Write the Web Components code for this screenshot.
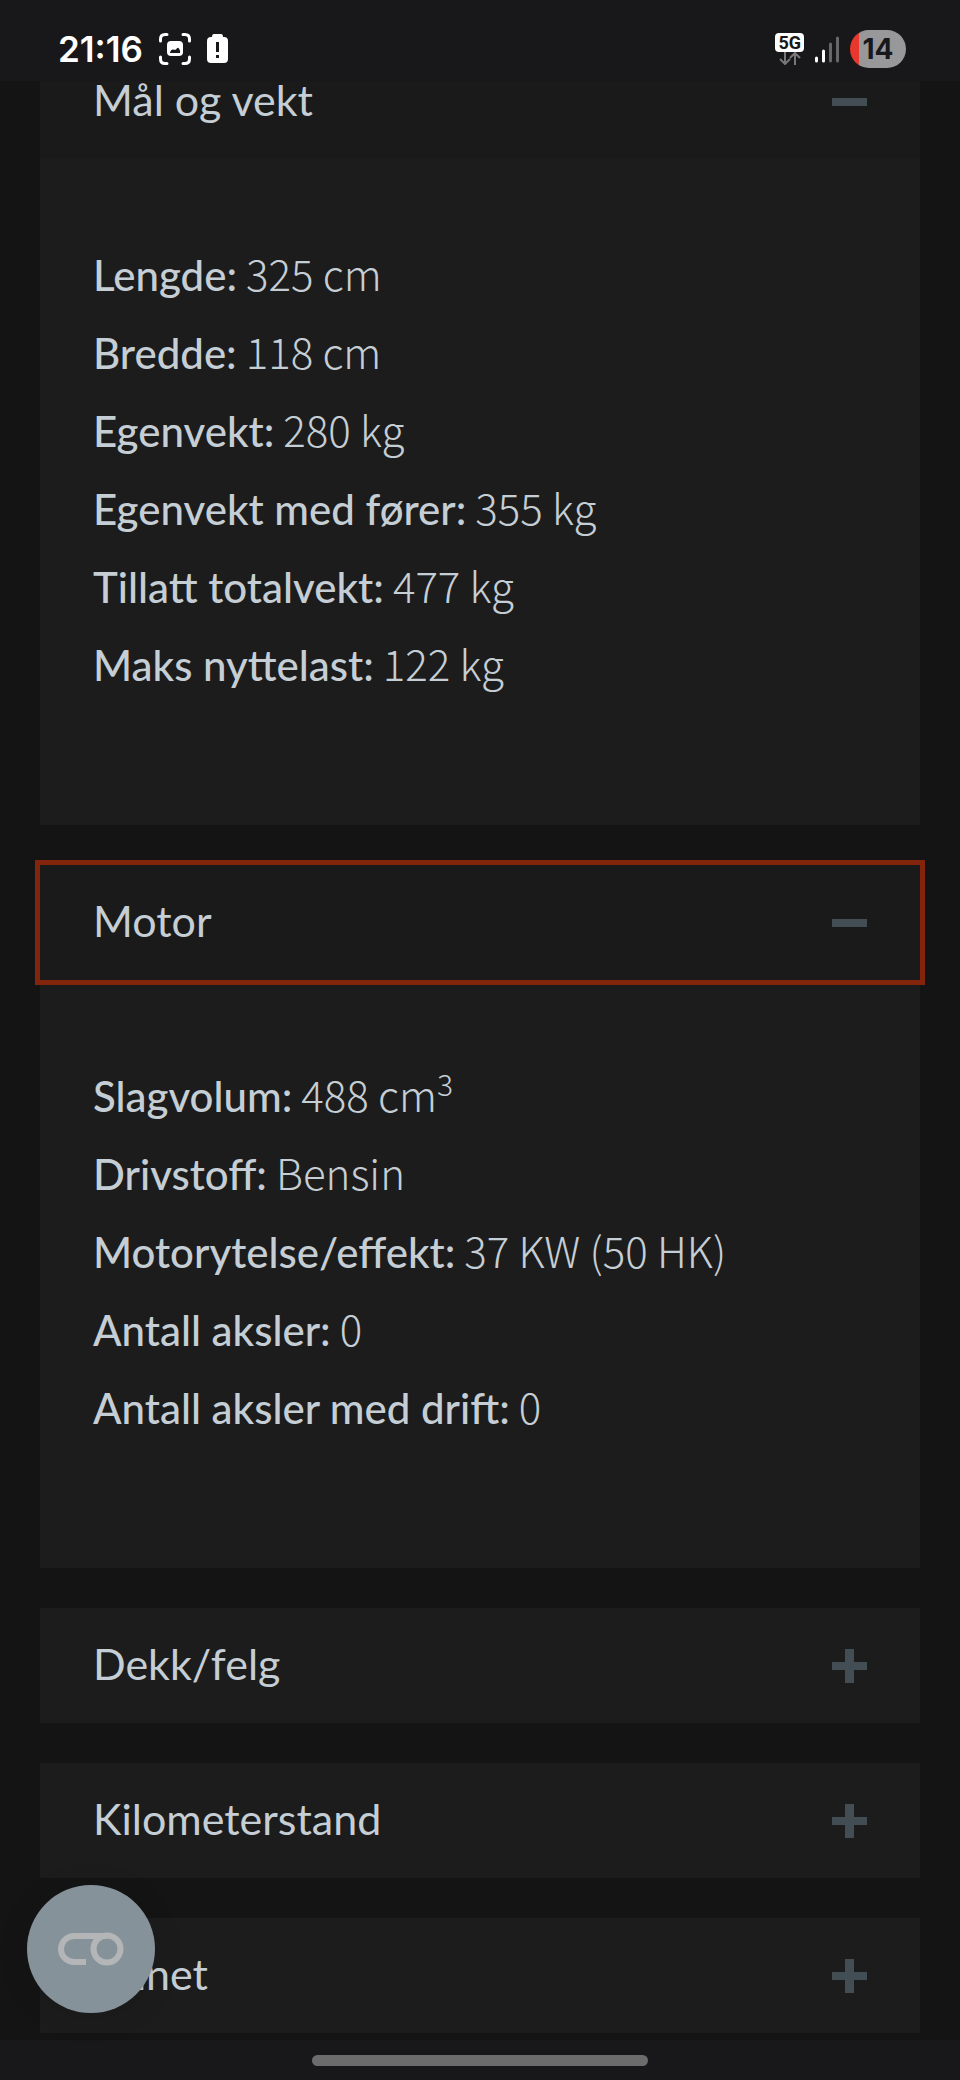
<!DOCTYPE html>
<html lang="no">
<head>
<meta charset="utf-8">
<meta name="viewport" content="width=device-width, initial-scale=1">
<title>Kjøretøydetaljer</title>
<style>
  html { background: #141414; }
  body {
    margin: 0;
    background: #141414;
    color: #c5ced4;
    font-family: Lato, "Noto Sans", sans-serif;
    font-size: 42px;
  }
</style>
</head>
<body>
<vehicle-page>
  <status-bar slot="status" time="21:16" battery="14"></status-bar>
  <accordion-item heading="Mål og vekt" open>
    <spec-row label="Lengde:">325 cm</spec-row>
    <spec-row label="Bredde:">118 cm</spec-row>
    <spec-row label="Egenvekt:">280 kg</spec-row>
    <spec-row label="Egenvekt med fører:">355 kg</spec-row>
    <spec-row label="Tillatt totalvekt:">477 kg</spec-row>
    <spec-row label="Maks nyttelast:">122 kg</spec-row>
  </accordion-item>
  <accordion-item heading="Motor" open current>
    <spec-row label="Slagvolum:">488 cm<sup>3</sup></spec-row>
    <spec-row label="Drivstoff:">Bensin</spec-row>
    <spec-row label="Motorytelse/effekt:">37 KW (50 HK)</spec-row>
    <spec-row label="Antall aksler:">0</spec-row>
    <spec-row label="Antall aksler med drift:">0</spec-row>
  </accordion-item>
  <accordion-item heading="Dekk/felg"></accordion-item>
  <accordion-item heading="Kilometerstand"></accordion-item>
  <accordion-item heading="Annet"></accordion-item>
  <chat-button slot="overlay"></chat-button>
  <gesture-bar slot="navigation"></gesture-bar>
</vehicle-page>

<script>
  class BaseElement extends HTMLElement {
    connectedCallback() {
      if (this.shadowRoot) return;
      this.attachShadow({ mode: 'open' }).innerHTML = this.render();
      this.ready();
    }
    ready() {}
  }

  customElements.define('vehicle-page', class extends BaseElement {
    render() {
      return `
        <style>
          :host { display: flex; flex-direction: column; min-height: 100vh; }
          main {
            display: flex; flex-direction: column; gap: 40px; flex: 1;
            margin-top: -37px; padding: 0 40px 7px;
          }
        </style>
        <slot name="status"></slot>
        <main><slot></slot></main>
        <slot name="overlay"></slot>
        <slot name="navigation"></slot>`;
    }
  });

  customElements.define('status-bar', class extends BaseElement {
    render() {
      return `
        <style>
          :host {
            display: flex; align-items: center; justify-content: space-between;
            position: sticky; top: 0; z-index: 2; box-sizing: border-box;
            height: 81px; padding: 17px 54px 0 58px;
            background: #18181a; color: #fff;
            font-family: Inter, sans-serif; font-weight: 600;
          }
          .side { display: flex; align-items: center; }
          .left { gap: 16px; }
          .right { gap: 11px; }
          time { font-size: 35px; line-height: 40px; }
          svg { display: block; }
          .network { display: flex; flex-direction: column; align-items: center; }
          .network b {
            padding: 0 3px; border-radius: 4px; background: #fff; color: #18181a;
            font: 700 18px/19px Roboto, sans-serif;
          }
          .battery {
            width: 56px; border-radius: 19px; text-align: center;
            background: linear-gradient(90deg, #e8382d 9px, #98989a 9px);
            color: #18181a; font-size: 28px; font-weight: 700; line-height: 38px;
          }
        </style>
        <div class="side left">
          <time>${this.getAttribute('time')}</time>
          <svg width="32" height="32" viewBox="0 0 32 32" fill="none" stroke="#fff" stroke-width="3" stroke-linecap="round" aria-hidden="true">
            <path d="M1.5 8V6Q1.5 1.5 6 1.5H8M24 1.5h2Q30.500 1.500 30.500 6V8M30.500 24v2Q30.500 30.500 26 30.500H24M8 30.500H6Q1.500 30.500 1.500 26V24"/>
            <rect x="8" y="8" width="16" height="15" rx="4" fill="#fff" stroke="none"/>
            <path d="M11 19.500Q12 16 14 16.500T17 16.500Q19 13 20.500 16.500Q21.500 18 21 20H12Q11 20 11 19.500Z" fill="#18181a" stroke="none"/>
          </svg>
          <svg width="21" height="30" viewBox="0 0 21 30" aria-hidden="true">
            <path fill="#fff" d="M7 0h7q2 0 2 3h1q4 0 4 4v18q0 4-4 4H4q-4 0-4-4V7q0-4 4-4h1q0-3 2-3z"/>
            <path fill="#18181a" d="M9 8h3v10H9zM9 21h3v3H9z"/>
          </svg>
        </div>
        <div class="side right">
          <div class="network">
            <b>5G</b>
            <svg width="22" height="13" viewBox="0 0 22 13" fill="none" stroke="#77777a" stroke-width="2" aria-hidden="true">
              <path d="M6 0v11M1 7l5 5 5-5M16 13V1M11 6l5-5 5 5"/>
            </svg>
          </div>
          <svg width="24" height="27" viewBox="0 0 24 27" stroke-width="3" stroke-linecap="round" aria-hidden="true">
            <path stroke="#fff" d="M1.500 22v3M8.500 15v10"/>
            <path stroke="#67676a" d="M15.500 8v17M22.500 2v23"/>
          </svg>
          <div class="battery">${this.getAttribute('battery')}</div>
        </div>`;
    }
  });

  customElements.define('accordion-item', class extends BaseElement {
    render() {
      const open = this.hasAttribute('open');
      return `
        <style>
          :host { display: block; background: #1c1c1c; }
          h2 { margin: 0; font: inherit; }
          button {
            display: flex; align-items: center; justify-content: space-between;
            box-sizing: border-box; width: 100%; height: 115px; padding: 0 53px;
            border: 0; background: #1c1c1c; color: inherit;
            font: inherit; font-size: 43px; line-height: 52px; text-align: left; cursor: pointer;
          }
          button span { padding-bottom: 4px; }
          button[aria-expanded="true"] { background: #1a1a1a; }
          :host([current]) button { outline: 5px solid #83240d; }
          svg { display: block; fill: #434e54; }
          button[aria-expanded="true"] .upright { display: none; }
          .panel { padding: 75px 53px 123px; }
          .panel[hidden] { display: none; }
        </style>
        <h2>
          <button type="button" aria-expanded="${open}" aria-controls="panel">
            <span>${this.getAttribute('heading')}</span>
            <svg width="35" height="34" viewBox="0 0 35 34" aria-hidden="true">
              <rect y="13" width="35" height="8"/>
              <rect class="upright" x="13" width="9" height="34"/>
            </svg>
          </button>
        </h2>
        <div class="panel" id="panel" ${open ? '' : 'hidden'}><slot></slot></div>`;
    }
    ready() {
      const button = this.shadowRoot.querySelector('button');
      const panel = this.shadowRoot.querySelector('.panel');
      button.addEventListener('click', () => {
        const open = button.getAttribute('aria-expanded') !== 'true';
        button.setAttribute('aria-expanded', open);
        panel.hidden = !open;
      });
    }
  });

  customElements.define('spec-row', class extends BaseElement {
    render() {
      return `
        <style>
          :host { display: flex; align-items: baseline; gap: 9px; height: 78px; line-height: 78px; }
          .label { font-weight: 500; }
          .value { font-family: "Noto Sans CJK JP", "Noto Sans", sans-serif; font-weight: 300; }
          ::slotted(sup) { font-size: 30px; line-height: 0; vertical-align: 16px; }
        </style>
        <span class="label">${this.getAttribute('label')}</span>
        <span class="value"><slot></slot></span>`;
    }
  });

  customElements.define('chat-button', class extends BaseElement {
    render() {
      return `
        <style>
          :host { position: fixed; left: 27px; bottom: 67px; z-index: 3; }
          button {
            display: grid; place-items: center; width: 128px; height: 128px; padding: 0;
            border: 0; border-radius: 50%; background: #869299;
            box-shadow: 0 4px 32px rgba(0, 0, 0, .1); cursor: pointer;
          }
        </style>
        <button type="button" aria-label="Åpne chat">
          <svg width="66" height="34" viewBox="0 0 66 34" fill="none" stroke="#b3b5b6" stroke-width="6" aria-hidden="true">
            <path d="M28 30H16A13 13 0 0 1 16 4H49"/>
            <circle cx="49" cy="17" r="13.500"/>
          </svg>
        </button>`;
    }
  });

  customElements.define('gesture-bar', class extends BaseElement {
    render() {
      return `
        <style>
          :host {
            display: flex; align-items: center; justify-content: center;
            position: sticky; bottom: 0; z-index: 2; height: 40px; background: #18181a;
          }
          span { width: 35%; height: 11px; border-radius: 6px; background: #6c6c6c; }
        </style>
        <span></span>`;
    }
  });
</script>
</body>
</html>
